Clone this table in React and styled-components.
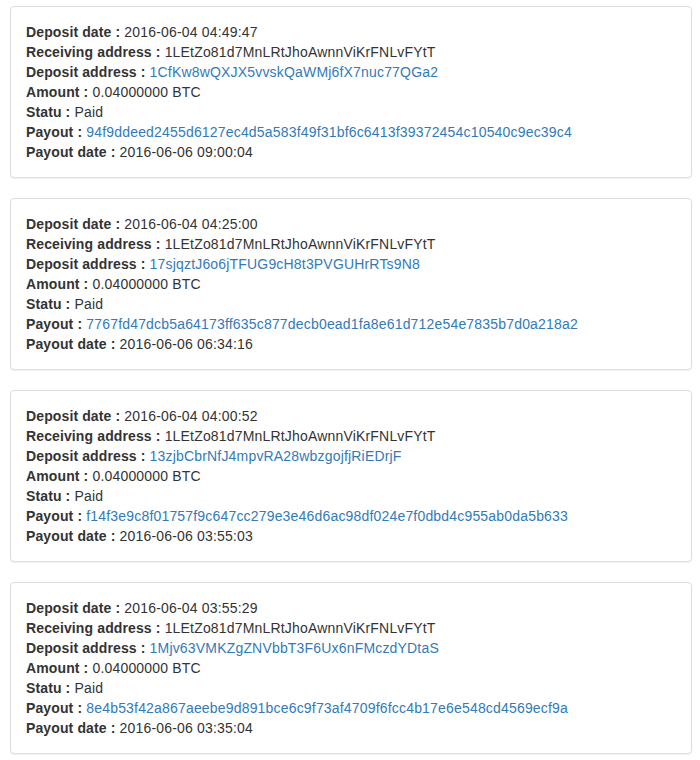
import React from "react";
import styled, { createGlobalStyle } from "styled-components";

const Global = createGlobalStyle`
  html, body { margin: 0; padding: 0; background: #fff; }
  body {
    font-family: "Liberation Sans", Arial, Helvetica, sans-serif;
    font-size: 14px;
    line-height: 20px;
    color: #333;
  }
`;

const Page = styled.div`
  padding: 6px 8px 0 10px;
`;

const Panel = styled.div`
  background: #fff;
  border: 1px solid #ddd;
  border-radius: 4px;
  box-shadow: 0 1px 1px rgba(0, 0, 0, 0.05);
  margin-bottom: 20px;
`;

const PanelBody = styled.div`
  padding: 15px;
`;

const Row = styled.div`
  white-space: nowrap;
  letter-spacing: 0.18px;
`;

const Label = styled.b`
  font-weight: bold;
  letter-spacing: 0.12px;
`;

const Link = styled.a`
  color: #337ab7;
  text-decoration: none;
`;

const deposits = [
  {
    date: "2016-06-04 04:49:47",
    recv: "1LEtZo81d7MnLRtJhoAwnnViKrFNLvFYtT",
    addr: "1CfKw8wQXJX5vvskQaWMj6fX7nuc77QGa2",
    amount: "0.04000000 BTC",
    statu: "Paid",
    payout: "94f9ddeed2455d6127ec4d5a583f49f31bf6c6413f39372454c10540c9ec39c4",
    payoutDate: "2016-06-06 09:00:04",
  },
  {
    date: "2016-06-04 04:25:00",
    recv: "1LEtZo81d7MnLRtJhoAwnnViKrFNLvFYtT",
    addr: "17sjqztJ6o6jTFUG9cH8t3PVGUHrRTs9N8",
    amount: "0.04000000 BTC",
    statu: "Paid",
    payout: "7767fd47dcb5a64173ff635c877decb0ead1fa8e61d712e54e7835b7d0a218a2",
    payoutDate: "2016-06-06 06:34:16",
  },
  {
    date: "2016-06-04 04:00:52",
    recv: "1LEtZo81d7MnLRtJhoAwnnViKrFNLvFYtT",
    addr: "13zjbCbrNfJ4mpvRA28wbzgojfjRiEDrjF",
    amount: "0.04000000 BTC",
    statu: "Paid",
    payout: "f14f3e9c8f01757f9c647cc279e3e46d6ac98df024e7f0dbd4c955ab0da5b633",
    payoutDate: "2016-06-06 03:55:03",
  },
  {
    date: "2016-06-04 03:55:29",
    recv: "1LEtZo81d7MnLRtJhoAwnnViKrFNLvFYtT",
    addr: "1Mjv63VMKZgZNVbbT3F6Ux6nFMczdYDtaS",
    amount: "0.04000000 BTC",
    statu: "Paid",
    payout: "8e4b53f42a867aeebe9d891bce6c9f73af4709f6fcc4b17e6e548cd4569ecf9a",
    payoutDate: "2016-06-06 03:35:04",
  },
];

export default function App() {
  return (
    <>
      <Global />
      <Page>
        {deposits.map((d) => (
          <Panel key={d.payout}>
            <PanelBody>
              <Row><Label>Deposit date :</Label> {d.date}</Row>
              <Row><Label>Receiving address :</Label> {d.recv}</Row>
              <Row><Label>Deposit address :</Label> <Link href="#">{d.addr}</Link></Row>
              <Row><Label>Amount :</Label> {d.amount}</Row>
              <Row><Label>Statu :</Label> {d.statu}</Row>
              <Row><Label>Payout :</Label> <Link href="#">{d.payout}</Link></Row>
              <Row><Label>Payout date :</Label> {d.payoutDate}</Row>
            </PanelBody>
          </Panel>
        ))}
      </Page>
    </>
  );
}
